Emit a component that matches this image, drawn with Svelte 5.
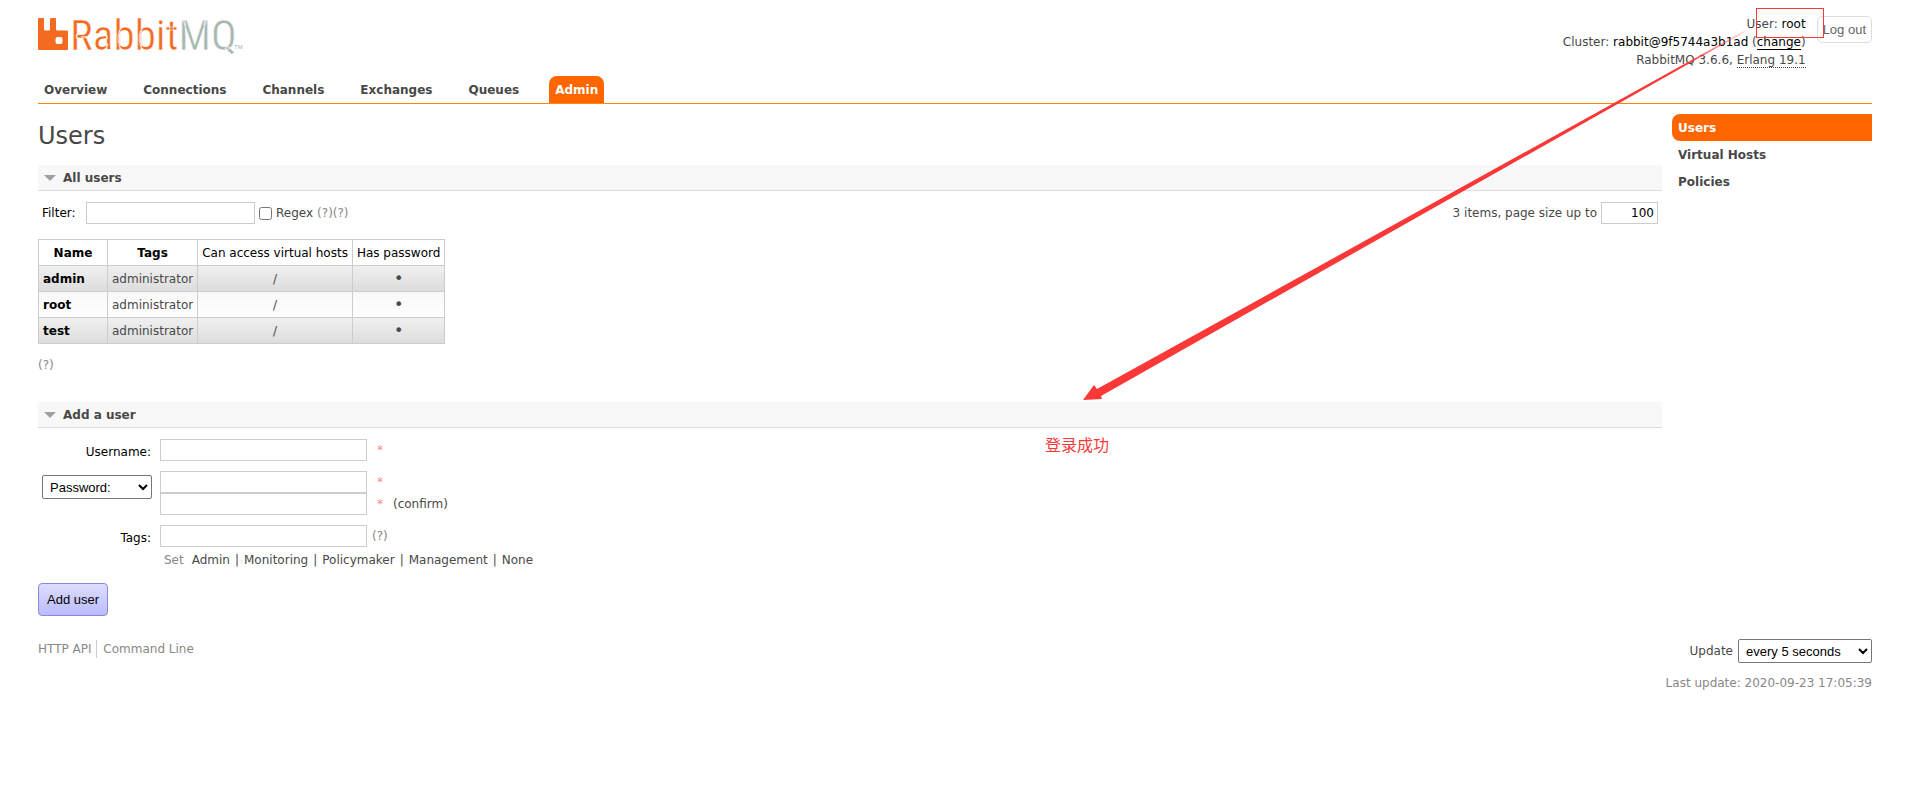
<script>
  const tabs = ['Overview', 'Connections', 'Channels', 'Exchanges', 'Queues', 'Admin'];
  const adminPages = ['Users', 'Virtual Hosts', 'Policies'];
  const tagNames = ['Admin', 'Monitoring', 'Policymaker', 'Management', 'None'];
  const users = [
    { name: 'admin', tags: 'administrator', vhosts: '/', password: true },
    { name: 'root', tags: 'administrator', vhosts: '/', password: true },
    { name: 'test', tags: 'administrator', vhosts: '/', password: true }
  ];

  let filter = $state('');
  let pageSize = $state('100');
  let newTags = $state('');

  let shown = $derived(users.filter((u) => u.name.includes(filter)));

  function setTag(tag) {
    newTags = tag === 'None' ? '' : tag.toLowerCase();
  }
</script>

<div class="page">
  <header>
    <svg class="logo" width="220" height="58" viewBox="0 -12 220 58" role="img" aria-label="RabbitMQ">
      <path
        fill="#f36b21"
        fill-rule="evenodd"
        d="M1 1h4q1 0 1 1v10q0 1.500 1.500 1.500h3q1.500 0 1.500-1.500V2q0-1 1-1h4q1 0 1 1v10q0 1.500 1.500 1.500H29q1 0 1 1V32q0 1-1 1H1q-1 0-1-1V2q0-1 1-1zM19.500 20q-2 0-2 2v3q0 2 2 2h3q2 0 2-2v-3q0-2-2-2z"
      />
      <text class="wordmark" x="32" y="33"><tspan fill="#f36b21" stroke="#fff">Rabbit</tspan><tspan fill="#a9b7b1" stroke="#fff">MQ</tspan></text>
      <text class="tm" x="196" y="32">TM</text>
    </svg>

    <div class="login">
      <ul class="status">
        <li>User: <b>root</b></li>
        <li>Cluster: <b>rabbit@9f5744a3b1ad</b> (<a href="#/cluster-name">change</a>)</li>
        <li>RabbitMQ 3.6.6, <abbr>Erlang 19.1</abbr></li>
      </ul>
      <button class="logout" type="button">Log out</button>
    </div>
  </header>

  <nav class="tabs">
    {#each tabs as tab}
      <a href="#/{tab.toLowerCase()}" class:selected={tab === 'Admin'}>{tab}</a>
    {/each}
  </nav>

  <div class="columns">
    <main>
      <h1>Users</h1>

      <section class="all-users">
        <h2>All users</h2>
        <div class="filter">
          <label class="filter-label" for="filter">Filter:</label>
          <input id="filter" class="filter-text" type="text" bind:value={filter} />
          <input id="regex" type="checkbox" />
          <label for="regex">Regex</label>
          <span class="help">(?)(?)</span>
          <label class="paging" for="page-size">3 items, page size up to</label>
          <input id="page-size" class="page-size" type="text" bind:value={pageSize} />
        </div>
        <table>
          <thead>
            <tr>
              <th>Name</th>
              <th>Tags</th>
              <th class="plain">Can access virtual hosts</th>
              <th class="plain">Has password</th>
            </tr>
          </thead>
          <tbody>
            {#each shown as user}
              <tr>
                <td class="name"><a href="#/users/{user.name}">{user.name}</a></td>
                <td class="center">{user.tags}</td>
                <td class="center">{user.vhosts}</td>
                <td class="center dot">{user.password ? '•' : ''}</td>
              </tr>
            {/each}
          </tbody>
        </table>
        <p class="help">(?)</p>
      </section>

      <section>
        <h2>Add a user</h2>
        <form>
          <div class="row">
            <label class="row-label" for="username">Username:</label>
            <div class="field">
              <input id="username" type="text" />
              <span class="mand">*</span>
            </div>
          </div>
          <div class="row">
            <div class="row-label">
              <select aria-label="Password type">
                <option>Password:</option>
                <option>No password</option>
              </select>
            </div>
            <div>
              <div class="field">
                <input type="password" aria-label="Password" />
                <span class="mand">*</span>
              </div>
              <div class="field">
                <input id="confirm" type="password" />
                <span class="mand">*</span>
                <label for="confirm">(confirm)</label>
              </div>
            </div>
          </div>
          <div class="row">
            <label class="row-label" for="tags">Tags:</label>
            <div>
              <div class="field">
                <input id="tags" type="text" bind:value={newTags} />
                <span class="help">(?)</span>
              </div>
              <div class="presets">
                <span class="set">Set</span>
                {#each tagNames as tag, i}
                  {#if i > 0}<span>|</span>{/if}
                  <button type="button" onclick={() => setTag(tag)}>{tag}</button>
                {/each}
              </div>
            </div>
          </div>
          <button class="add" type="button">Add user</button>
        </form>
      </section>
    </main>

    <aside>
      {#each adminPages as item}
        <a href="#/{item.toLowerCase()}" class:selected={item === 'Users'}>{item}</a>
      {/each}
    </aside>
  </div>

  <footer>
    <div class="links">
      <a href="#/api">HTTP API</a>
      <a href="#/cli">Command Line</a>
    </div>
    <div class="update">
      <div class="interval">
        <label for="update-every">Update</label>
        <select id="update-every">
          <option>every 5 seconds</option>
          <option>every 30 seconds</option>
        </select>
      </div>
      <p>Last update: 2020-09-23 17:05:39</p>
    </div>
  </footer>

  <!-- callout drawn over the console -->
  <svg class="callout" width="870" height="470" viewBox="0 0 870 470">
    <defs>
      <linearGradient id="fade" gradientUnits="userSpaceOnUse" x1="703" y1="31" x2="640" y2="66">
        <stop offset="0" stop-color="#fb3838" stop-opacity="0.2" />
        <stop offset="1" stop-color="#fb3838" />
      </linearGradient>
    </defs>
    <rect x="714.500" y="8.500" width="67" height="29" fill="none" stroke="#fb3838" />
    <path fill="url(#fade)" d="M41 400L52 385L55 389L702 31L703 32L59 396L60 399Z" />
    <text x="3" y="451">登录成功</text>
  </svg>
</div>

<style>
  :global(body) {
    margin: 0;
    background: #fff;
  }

  .page {
    position: relative;
    padding: 5px 40px 0 38px;
    font: 12px/18px Verdana, 'DejaVu Sans', sans-serif;
    color: #484848;
  }

  a {
    color: inherit;
    text-decoration: none;
  }

  header {
    display: flex;
    justify-content: space-between;
    align-items: flex-start;
    height: 71px;
  }

  .wordmark {
    font-family: 'Liberation Sans Narrow', 'Roboto Condensed', sans-serif;
    font-size: 43px;
    stroke-width: 0.6px;
  }

  .tm {
    font: 6px 'Liberation Sans', sans-serif;
    fill: #a9b7b1;
  }

  .login {
    display: flex;
    gap: 11px;
    padding-top: 10px;
  }

  .status {
    list-style: none;
    margin: 0;
    padding: 0;
    text-align: right;
  }

  .status b,
  .status a {
    color: #000;
    font-weight: normal;
  }

  .status a {
    border-bottom: 1px solid #000;
  }

  abbr {
    border-bottom: 1px dotted #484848;
  }

  .logout {
    height: 27px;
    margin-top: 1px;
    padding: 0 5px;
    border: 1px solid #ddd;
    border-radius: 5px;
    background: #fff;
    color: #666;
    font: 13px 'Liberation Sans', Arial, sans-serif;
  }

  .tabs {
    display: flex;
    gap: 24px;
    border-bottom: 1px solid #f80;
  }

  .tabs a {
    padding: 5px 6px 4px;
    border-radius: 8px 8px 0 0;
    font-weight: bold;
  }

  .tabs a.selected,
  aside a.selected {
    background: #f60;
    color: #fff;
  }

  .columns {
    display: flex;
    gap: 10px;
    align-items: flex-start;
  }

  main {
    flex: 1;
  }

  h1 {
    margin: 17px 0 13px;
    font-size: 24px;
    line-height: 31px;
    font-weight: normal;
  }

  h2 {
    display: flex;
    align-items: center;
    gap: 7px;
    margin: 0;
    padding: 4px 6px 3px;
    background: #f8f8f8;
    border-bottom: 1px solid #ddd;
    font-size: 12px;
    line-height: 18px;
  }

  h2::before {
    content: '';
    border: solid transparent;
    border-width: 6px 6px 0;
    border-top-color: #a0a0a0;
  }

  .all-users {
    margin-bottom: 28px;
  }

  input,
  select {
    box-sizing: border-box;
    margin: 0;
  }

  input[type='text'],
  input[type='password'] {
    height: 22px;
    padding: 2px 3px;
    border: 1px solid #ccc;
    font: inherit;
  }

  select {
    height: 24px;
    padding: 0 3px;
    border: 1px solid #767676;
    border-radius: 2px;
    background: #fff;
    color: #000;
    font: 13px 'Liberation Sans', Arial, sans-serif;
  }

  .filter {
    display: flex;
    align-items: center;
    gap: 4px;
    padding: 11px 4px 15px;
  }

  .filter-label {
    width: 40px;
    color: #000;
  }

  .filter-text {
    width: 169px;
  }

  .paging {
    margin-left: auto;
  }

  input.page-size {
    width: 57px;
    text-align: right;
  }

  .help {
    color: #888;
  }

  p.help {
    margin: 12px 0 0;
  }

  table {
    border-collapse: collapse;
  }

  th,
  td {
    height: 25px;
    padding: 0 4px;
    border: 1px solid #ccc;
  }

  th {
    color: #000;
  }

  th:first-child {
    min-width: 60px;
  }

  .plain {
    font-weight: normal;
  }

  tbody tr {
    background: linear-gradient(#f8f8f8, #fff);
  }

  tbody tr:nth-child(odd) {
    background: linear-gradient(#f0f0f0, #dcdcdc);
  }

  .center {
    text-align: center;
  }

  .dot {
    font-size: 16px;
  }

  .name {
    color: #000;
    font-weight: bold;
  }

  form {
    padding-top: 11px;
  }

  .row {
    display: grid;
    grid-template-columns: 114px 1fr;
    column-gap: 8px;
    align-items: start;
    margin-bottom: 10px;
  }

  .row-label {
    padding-top: 4px;
    text-align: right;
    color: #000;
  }

  label.row-label {
    padding-right: 1px;
  }

  .row-label select {
    width: 110px;
  }

  .field {
    display: flex;
    align-items: center;
  }

  .field input {
    width: 207px;
  }

  .field .help {
    padding-left: 5px;
  }

  .mand {
    padding: 0 10px;
    color: #f88;
  }

  .presets {
    display: flex;
    gap: 5px;
    padding: 4px 4px 0;
  }

  .presets button {
    padding: 0;
    border: 0;
    background: none;
    color: inherit;
    font: inherit;
    cursor: pointer;
  }

  .set {
    padding-right: 3px;
    color: #888;
  }

  .add {
    height: 33px;
    margin-top: 4px;
    padding: 0 8px;
    border: 1px solid #88d;
    border-radius: 4px;
    background: linear-gradient(#ddf, #bbf);
    color: #000;
    font: 13px 'Liberation Sans', Arial, sans-serif;
  }

  aside {
    width: 200px;
    padding-top: 10px;
  }

  aside a {
    display: block;
    padding: 5px 6px 4px;
    border-radius: 8px 0 0 8px;
    font-weight: bold;
  }

  footer {
    display: flex;
    justify-content: space-between;
    padding-top: 23px;
  }

  .links {
    padding-top: 1px;
  }

  .links a {
    color: #888;
  }

  .links a + a {
    margin-left: 1px;
    padding: 2px 0 2px 6px;
    border-left: 1px solid #ccc;
  }

  .update {
    text-align: right;
  }

  .interval {
    display: flex;
    align-items: center;
    justify-content: flex-end;
    gap: 5px;
  }

  .interval select {
    width: 134px;
  }

  .update p {
    margin: 11px 0 0;
    color: #888;
  }

  .callout {
    position: absolute;
    top: 0;
    right: 0;
    pointer-events: none;
  }

  .callout text {
    font: 16px 'Noto Sans CJK SC', sans-serif;
    fill: #fb3838;
  }
</style>
